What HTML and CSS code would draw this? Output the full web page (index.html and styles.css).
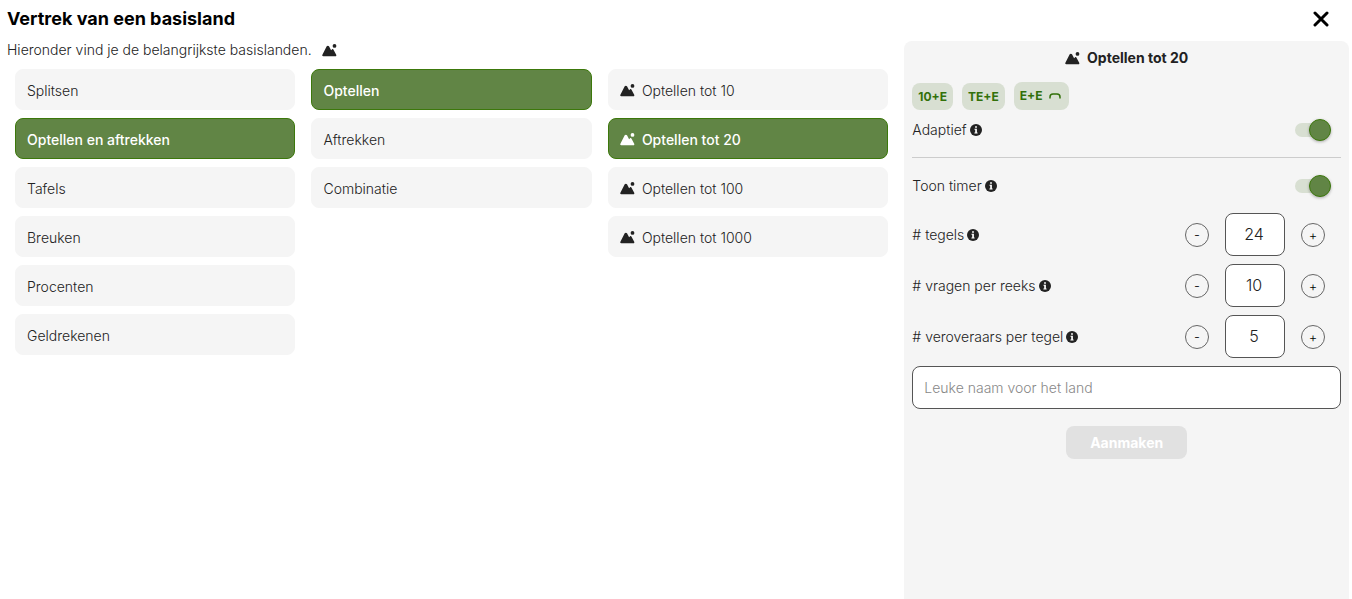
FILE: index.html
```html
<!DOCTYPE html>
<html lang="nl">
<head>
    <meta charset="UTF-8">
    <meta name="viewport" content="width=device-width, initial-scale=1.0">
    <title>Vertrek van een basisland</title>
    <link rel="stylesheet" href="styles.css">
</head>
<body>

    <!-- Shared icons -->
    <svg class="sprite" aria-hidden="true">
        <symbol id="land" viewBox="0 0 15 13">
            <path d="M1.300 12.200C.300 12.200 0 11.400.400 10.700L4.700 2.300C5.200 1.400 6.500 1.400 7 2.300L9.100 6.300 9.900 5.400C10.400 4.900 11 5 11.400 5.600L14.200 10.700C14.600 11.500 14.300 12.200 13.400 12.200Z"/>
            <circle cx="12.500" cy="1.900" r="1.900"/>
        </symbol>
        <symbol id="info" viewBox="0 0 12 12">
            <circle cx="6" cy="6" r="6"/>
            <path fill="#fff" d="M5.100 2.200H6.900V3.800H5.100ZM4.500 4.800H6.900V8.500H7.600V9.500H4.400V8.500H5.200V5.800H4.500Z"/>
        </symbol>
    </svg>

    <div class="page">
        <header class="header">
            <h1>Vertrek van een basisland</h1>
            <button class="close" type="button" aria-label="Sluiten">
                <svg viewBox="0 0 16 16"><path d="M2 2L14 14M14 2L2 14"/></svg>
            </button>
        </header>

        <div class="content">
            <main class="picker">
                <p class="intro">Hieronder vind je de belangrijkste basislanden. <svg class="land"><use href="#land"/></svg></p>

                <div class="columns">
                    <div class="column">
                        <button class="item" type="button">Splitsen</button>
                        <button class="item selected" type="button">Optellen en aftrekken</button>
                        <button class="item" type="button">Tafels</button>
                        <button class="item" type="button">Breuken</button>
                        <button class="item" type="button">Procenten</button>
                        <button class="item" type="button">Geldrekenen</button>
                    </div>
                    <div class="column">
                        <button class="item selected" type="button">Optellen</button>
                        <button class="item" type="button">Aftrekken</button>
                        <button class="item" type="button">Combinatie</button>
                    </div>
                    <div class="column">
                        <button class="item" type="button"><svg class="land"><use href="#land"/></svg>Optellen tot 10</button>
                        <button class="item selected" type="button"><svg class="land"><use href="#land"/></svg>Optellen tot 20</button>
                        <button class="item" type="button"><svg class="land"><use href="#land"/></svg>Optellen tot 100</button>
                        <button class="item" type="button"><svg class="land"><use href="#land"/></svg>Optellen tot 1000</button>
                    </div>
                </div>
            </main>

            <!-- Settings of the chosen country -->
            <aside class="panel">
                <h2><svg class="land"><use href="#land"/></svg>Optellen tot 20</h2>

                <div class="tags">
                    <span class="tag">10+E</span>
                    <span class="tag">TE+E</span>
                    <span class="tag tag-bridge">E+E <svg class="bridge" viewBox="0 0 12 8"><path d="M1 6.500V5C1 3 2.500 2 4 2H8C9.500 2 11 3 11 5V6.500"/></svg></span>
                </div>

                <form>
                    <div class="row">
                        <label for="adaptive">Adaptief<svg class="info"><use href="#info"/></svg></label>
                        <input class="switch" id="adaptive" type="checkbox" checked>
                    </div>
                    <hr>
                    <div class="row row-timer">
                        <label for="timer">Toon timer<svg class="info"><use href="#info"/></svg></label>
                        <input class="switch" id="timer" type="checkbox" checked>
                    </div>
                    <div class="row row-number">
                        <label for="tiles"># tegels<svg class="info"><use href="#info"/></svg></label>
                        <div class="stepper">
                            <button class="round" type="button" aria-label="Minder tegels">-</button>
                            <input class="number" id="tiles" type="text" inputmode="numeric" value="24">
                            <button class="round" type="button" aria-label="Meer tegels">+</button>
                        </div>
                    </div>
                    <div class="row row-number">
                        <label for="questions"># vragen per reeks<svg class="info"><use href="#info"/></svg></label>
                        <div class="stepper">
                            <button class="round" type="button" aria-label="Minder vragen">-</button>
                            <input class="number" id="questions" type="text" inputmode="numeric" value="10">
                            <button class="round" type="button" aria-label="Meer vragen">+</button>
                        </div>
                    </div>
                    <div class="row row-number">
                        <label for="conquerors"># veroveraars per tegel<svg class="info"><use href="#info"/></svg></label>
                        <div class="stepper">
                            <button class="round" type="button" aria-label="Minder veroveraars">-</button>
                            <input class="number" id="conquerors" type="text" inputmode="numeric" value="5">
                            <button class="round" type="button" aria-label="Meer veroveraars">+</button>
                        </div>
                    </div>
                    <input class="name" type="text" aria-label="Naam van het land" placeholder="Leuke naam voor het land">
                    <button class="create" type="submit" disabled>Aanmaken</button>
                </form>
            </aside>
        </div>
    </div>

</body>
</html>
```
FILE: styles.css
```css
/* Global Styles */
* {
    box-sizing: border-box;
}

body {
    margin: 0;
    font-family: Inter, sans-serif;
    font-size: 14px;
    font-weight: 350;
    line-height: 20px;
    color: #222;
    background-color: #fff;
}

button, input {
    font: inherit;
    color: inherit;
}

button {
    cursor: pointer;
}

.sprite {
    display: none;
}

.page {
    display: flex;
    flex-direction: column;
    min-height: 100vh;
    padding: 0 3px 0 7px;
}

/* Header */
.header {
    display: flex;
    justify-content: space-between;
    align-items: center;
    padding: 7px 20px 10px 0;
}

h1 {
    margin: 0;
    font-size: 18px;
    font-weight: 700;
    line-height: 24px;
    color: #000;
}

.close {
    display: flex;
    padding: 0;
    border: none;
    background: none;
}

.close svg {
    width: 16px;
    height: 16px;
    fill: none;
    stroke: #000;
    stroke-width: 3;
    stroke-linecap: round;
}

.content {
    flex: 1;
    display: grid;
    grid-template-columns: 2fr 1fr;
    gap: 8px;
}

/* Icons */
.land {
    width: 15px;
    height: 13px;
    margin-right: 7px;
    fill: currentColor;
}

.info {
    width: 12px;
    height: 12px;
    margin-left: 3px;
    fill: #222;
}

/* Country picker */
.intro {
    display: flex;
    align-items: center;
    gap: 10px;
    margin: 0;
    height: 18px;
}

.columns {
    display: grid;
    grid-template-columns: repeat(3, 1fr);
    gap: 16px;
    padding: 10px 8px;
}

.column {
    display: flex;
    flex-direction: column;
    gap: 8px;
}

.item {
    display: flex;
    align-items: center;
    height: 41px;
    padding: 2px 11px 0;
    border: 1px solid #f5f5f5;
    border-radius: 8px;
    background-color: #f5f5f5;
    text-align: left;
}

.item.selected {
    border-color: #3c780b;
    background-color: #618545;
    color: #fff;
    font-weight: 500;
}

/* Panel */
.panel {
    padding: 7px 8px;
    border-radius: 8px 8px 0 0;
    background-color: #f5f5f5;
}

h2 {
    display: flex;
    justify-content: center;
    align-items: center;
    margin: 0 0 14px;
    font-size: 14px;
    font-weight: 700;
    line-height: 20px;
}

.tags {
    display: flex;
    align-items: flex-end;
    gap: 9px;
    margin-bottom: 10px;
}

.tag {
    display: flex;
    align-items: center;
    gap: 6px;
    height: 27px;
    padding: 0 6px;
    border-radius: 8px;
    background-color: #d8dfd2;
    color: #32700a;
    font-size: 12px;
    font-weight: 700;
}

.tag-bridge {
    height: 28px;
}

.bridge {
    width: 12px;
    height: 8px;
    margin-right: 2px;
    fill: none;
    stroke: currentColor;
    stroke-width: 1.500;
}

.row {
    display: flex;
    justify-content: space-between;
    align-items: center;
}

.row label {
    display: flex;
    align-items: center;
}

.row-timer {
    margin-bottom: 17px;
}

.row-number {
    margin-bottom: 8px;
}

hr {
    margin: 17px 0 18px;
    border: none;
    border-top: 1px solid #ccc;
}

/* Toggle switch */
.switch {
    appearance: none;
    display: flex;
    justify-content: flex-end;
    align-items: center;
    width: 36px;
    height: 14px;
    margin: 0 10px 0 0;
    border-radius: 7px;
    background-color: #d8dfd2;
}

.switch::before {
    content: "";
    width: 20px;
    height: 20px;
    flex: none;
    border: 1px solid #3c780b;
    border-radius: 50%;
    background-color: #618545;
    box-shadow: 0 1px 3px rgba(0, 0, 0, 0.3);
}

/* Number fields */
.stepper {
    display: flex;
    align-items: center;
    gap: 16px;
    margin-right: 16px;
}

.round {
    width: 24px;
    height: 24px;
    padding: 0;
    border: 1px solid #666;
    border-radius: 50%;
    background: none;
    font-size: 13px;
    line-height: 22px;
    color: #000;
}

.number, .name {
    height: 43px;
    border: 1px solid #555;
    border-radius: 8px;
    background-color: #fff;
}

.number {
    width: 60px;
    padding: 0 2px 2px 0;
    font-size: 16px;
    text-align: center;
}

.name {
    display: block;
    width: 100%;
    padding: 0 11px;
}

.name::placeholder {
    color: #888;
}

.create {
    display: block;
    height: 33px;
    margin: 17px auto 0;
    padding: 0 24px;
    border: none;
    border-radius: 8px;
    background-color: #e1e1e1;
    color: #fff;
    font-weight: 700;
}
```
